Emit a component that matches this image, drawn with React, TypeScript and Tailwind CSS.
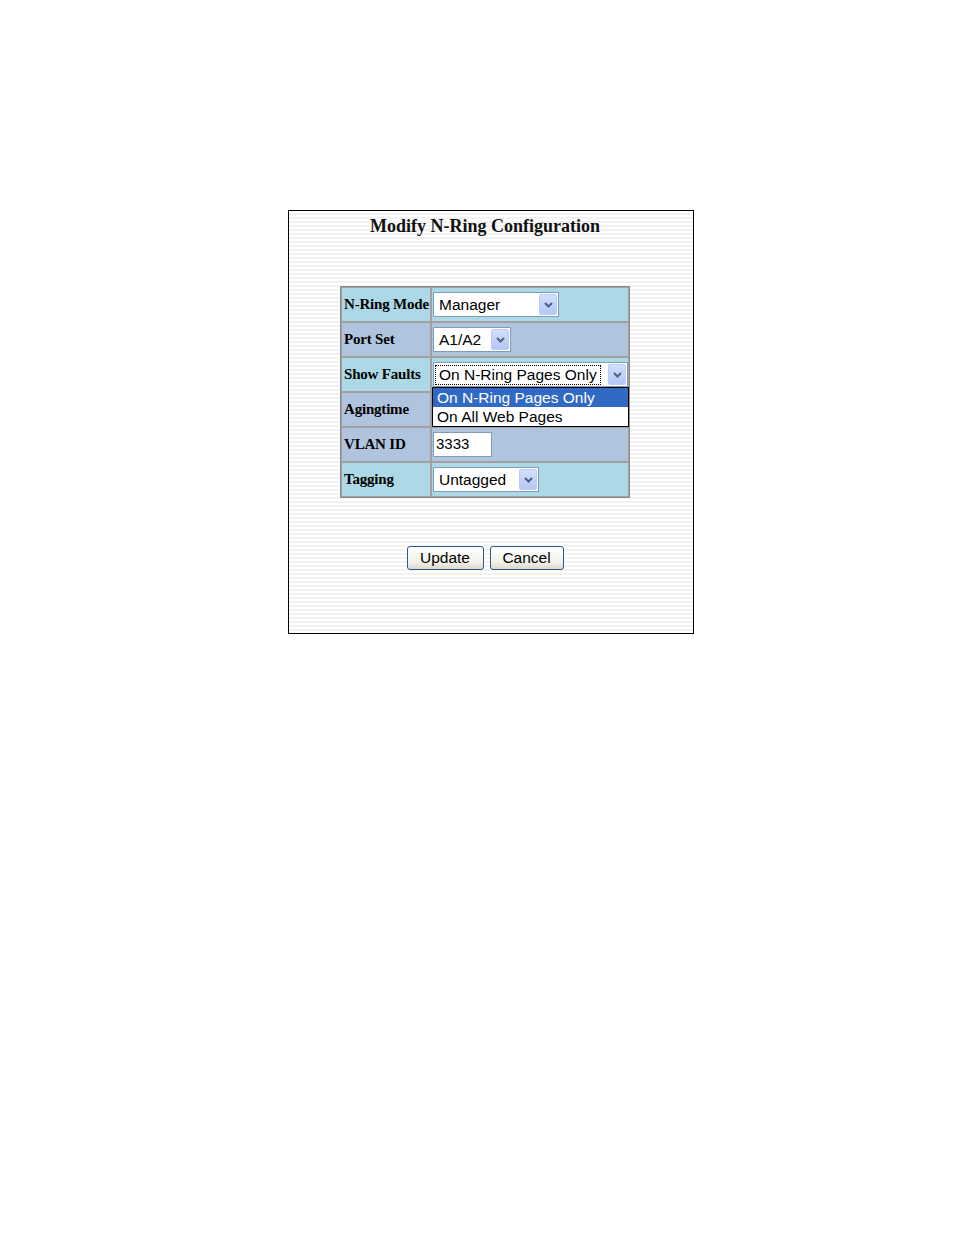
import React from "react";

function Arrow() {
  return (
    <span className="flex h-[21px] w-[18px] shrink-0 items-center justify-center rounded-[2px] border border-[#bccdf9] bg-[linear-gradient(#d3defc,#b4c7f5)]">
      <svg width="9" height="6" viewBox="0 0 9 6">
        <path d="M1 1 L4.5 4.5 L8 1" fill="none" stroke="#4d6185" strokeWidth="2" />
      </svg>
    </span>
  );
}

function FakeSelect({ value, width, focused }: { value: string; width: string; focused?: boolean }) {
  return (
    <div className={`flex h-[25px] items-center justify-between border border-[#7f9db9] bg-white pl-[2px] pr-[1px] ${width}`}>
      <span
        className={`px-[3px] text-[15.5px] leading-[18px] text-black ${focused ? "outline-1 outline-dotted outline-black" : ""}`}
      >
        {value}
      </span>
      <Arrow />
    </div>
  );
}

export default function App() {
  type Row = { label: string; bg: string; cell: React.ReactNode };

  const rows: Row[] = [
    { label: "N-Ring Mode", bg: "bg-[#add8e6]", cell: <FakeSelect value="Manager" width="w-[126px]" /> },
    { label: "Port Set", bg: "bg-[#b0c4de]", cell: <FakeSelect value="A1/A2" width="w-[78px]" /> },
    {
      label: "Show Faults",
      bg: "bg-[#add8e6]",
      cell: <FakeSelect value="On N-Ring Pages Only" width="w-[195px]" focused />,
    },
    { label: "Agingtime", bg: "bg-[#b0c4de]", cell: null },
    {
      label: "VLAN ID",
      bg: "bg-[#b0c4de]",
      cell: (
        <div className="flex h-[25px] w-[59px] items-center border border-[#7f9db9] bg-white pl-[2px] text-[15px] text-black">
          3333
        </div>
      ),
    },
    { label: "Tagging", bg: "bg-[#add8e6]", cell: <FakeSelect value="Untagged" width="w-[106px]" /> },
  ];

  return (
    <main className="min-h-[1235px] bg-white pt-[210px] font-['Liberation_Sans',Arial,sans-serif]">
      <div className="ml-[288px] h-[424px] w-[406px] border border-black bg-[repeating-linear-gradient(#ffffff_0px,#ffffff_2px,#f2f2f2_2px,#f2f2f2_4px)]">
        <div className="flex w-[392px] flex-col items-center">
          <h1 className="mt-[4px] font-['Liberation_Serif',serif] text-[18px] font-bold leading-[22px] text-[#111]">
            Modify N-Ring Configuration
          </h1>

          <div className="relative mt-[49px] grid w-[290px] grid-cols-[88px_196px] gap-[2px] border border-[#8c8c8c] bg-[#a0a0a0] p-[1px]">
            {rows.map((r) => (
              <React.Fragment key={r.label}>
                <div
                  className={`flex h-[33px] items-center pl-[2px] font-['Liberation_Serif',serif] text-[15px] font-bold tracking-[-0.2px] text-black ${r.bg}`}
                >
                  {r.label}
                </div>
                <div className={`flex h-[33px] items-center pl-[1px] ${r.bg}`}>{r.cell}</div>
              </React.Fragment>
            ))}

            <div className="absolute left-[91px] top-[100px] w-[197px] border border-black bg-white text-[15.5px] leading-[19px]">
              <div className="bg-[#316ac5] px-[4px] text-white">On N-Ring Pages Only</div>
              <div className="px-[4px] text-black">On All Web Pages</div>
            </div>
          </div>

          <div className="mt-[48px] flex gap-[6px]">
            <button className="h-[24px] w-[77px] rounded-[3px] border border-[#2c5a8c] bg-[linear-gradient(#ffffff,#f2f1ea_70%,#dcd8c8)] text-[15.5px] leading-[20px] text-black">
              Update
            </button>
            <button className="h-[24px] w-[74px] rounded-[3px] border border-[#2c5a8c] bg-[linear-gradient(#ffffff,#f2f1ea_70%,#dcd8c8)] text-[15.5px] leading-[20px] text-black">
              Cancel
            </button>
          </div>
        </div>
      </div>
    </main>
  );
}
